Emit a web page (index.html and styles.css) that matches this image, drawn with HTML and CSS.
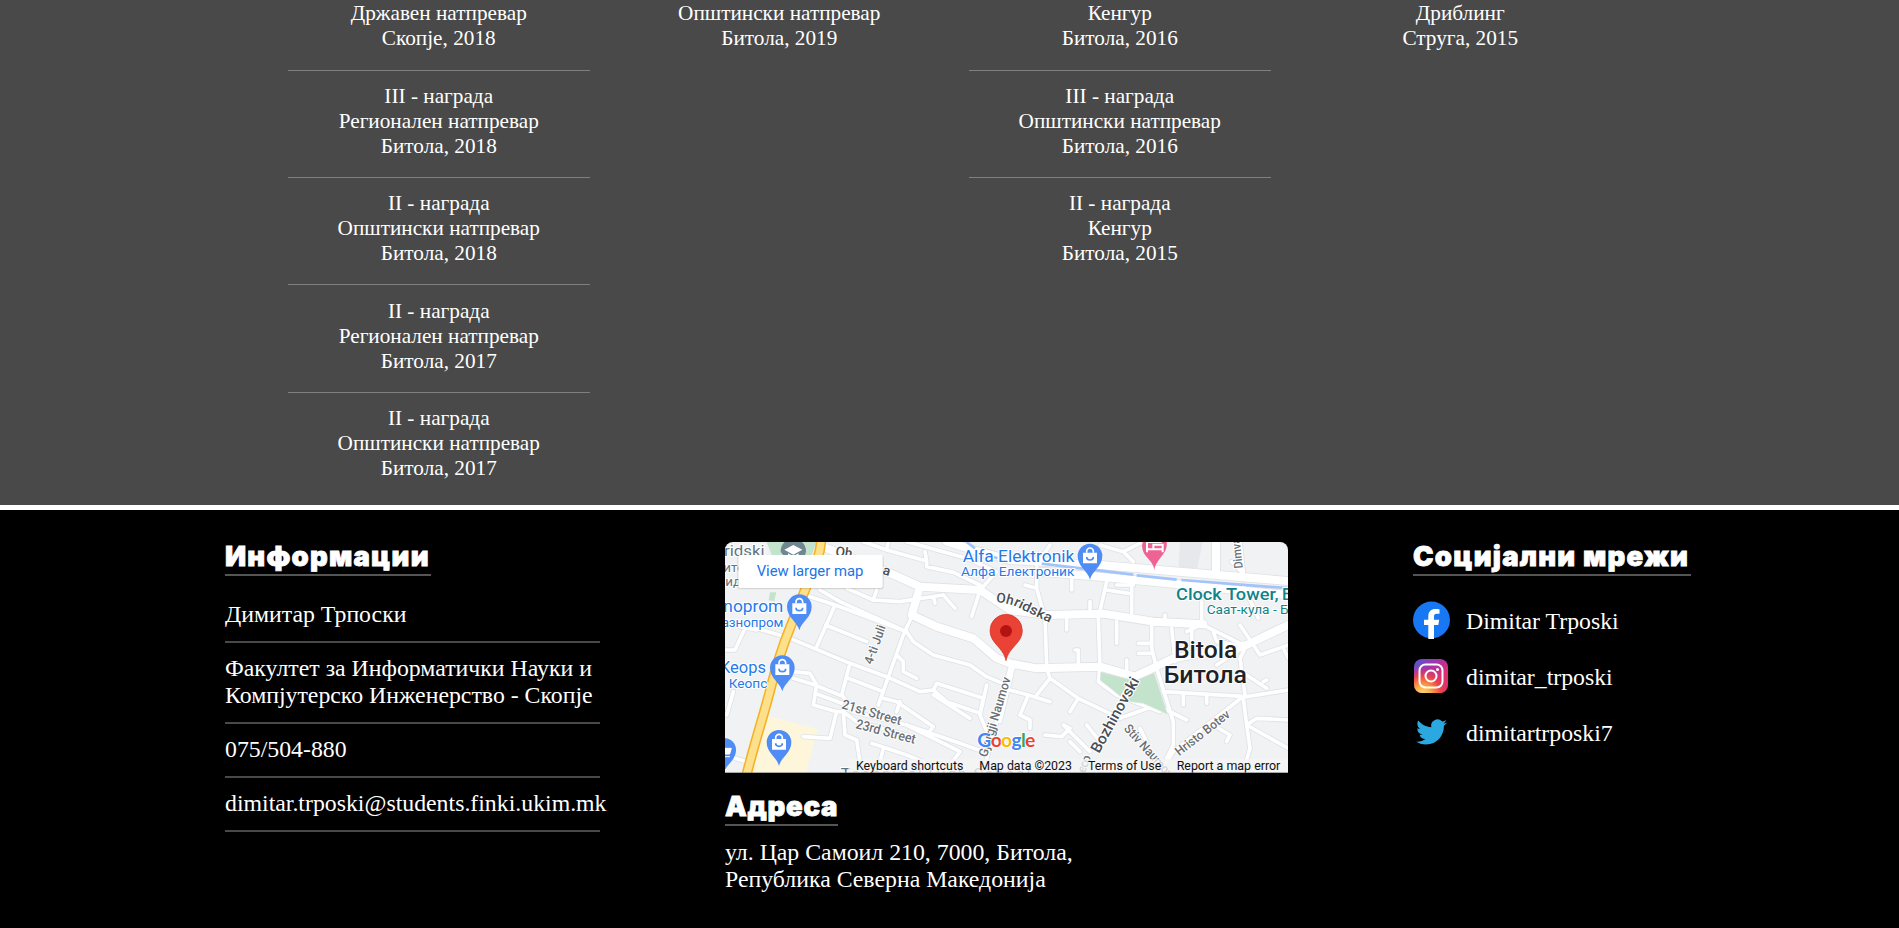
FILE: index.html
```html
<!DOCTYPE html>
<html lang="mk">
<head>
<meta charset="utf-8">
<title>Димитар Трпоски</title>
<link rel="stylesheet" href="styles.css">
</head>
<body>
<section class="awards">
  <div class="column">
    <p class="award">Државен натпревар<br>Скопје, 2018</p>
    <p class="award">III - награда<br>Регионален натпревар<br>Битола, 2018</p>
    <p class="award">II - награда<br>Општински натпревар<br>Битола, 2018</p>
    <p class="award">II - награда<br>Регионален натпревар<br>Битола, 2017</p>
    <p class="award">II - награда<br>Општински натпревар<br>Битола, 2017</p>
  </div>
  <div class="column">
    <p class="award">Општински натпревар<br>Битола, 2019</p>
  </div>
  <div class="column">
    <p class="award">Кенгур<br>Битола, 2016</p>
    <p class="award">III - награда<br>Општински натпревар<br>Битола, 2016</p>
    <p class="award">II - награда<br>Кенгур<br>Битола, 2015</p>
  </div>
  <div class="column">
    <p class="award">Дриблинг<br>Струга, 2015</p>
  </div>
</section>
<footer class="footer">
  <div class="info">
    <h2 class="title title-info">Информации</h2>
    <p class="row">Димитар Трпоски</p>
    <p class="row">Факултет за Информатички Науки и<br>Компјутерско Инженерство - Скопје</p>
    <p class="row">075/504-880</p>
    <p class="row">dimitar.trposki@students.finki.ukim.mk</p>
  </div>
  <div class="address">
    <svg class="map" viewBox="15 21 1689 693" preserveAspectRatio="none">
      <defs>
        <g id="small">
          <path d="M505 20L500 45L620 78L620 95L700 112L780 150M615 50L620 78M500 45L430 20M560 20L740 70L830 110L780 165L755 245M380 160L460 195L540 200L670 180M460 195L470 165M640 185L645 205M670 180L705 220M300 165L360 200L560 290M255 180L345 210L560 290M345 210L290 335M317 270L440 320M210 310L390 385L500 425L600 470L640 465L650 445L790 490M110 280L210 310M60 275L110 285M75 280L45 345L15 345M575 245L550 300L475 510M560 290L580 320L640 360L750 390L800 425L860 450M535 365L550 380L550 410L590 430M390 385L365 480M385 430L490 470M220 430L285 450L370 485L400 530L560 570L720 650M220 410L270 415L290 450L280 510L350 530L370 530L410 560L560 600M350 530L330 610L250 605M285 475L365 505M370 530L375 600L410 615L420 680M490 490L530 500L640 575L620 600M540 500L530 530M640 465L680 500L780 535L790 490M640 480L750 550M800 450L780 540L800 590M870 400L840 520L790 710M560 570L720 625L790 650M455 625L560 660L680 710M490 640L480 680M720 650L690 690M15 660L80 680M40 470L20 540"/>
          <g transform="translate(840)">
            <path d="M150 30L110 90L110 160L135 250L140 392M215 130L215 165M75 150L110 160M320 140L295 250L300 398M395 140L395 235M320 165L385 175M350 150L400 150M270 200L270 240M200 250L200 285M350 260L350 325M415 325L455 325M415 355L455 355M455 270L455 340L470 400L520 560L520 630L500 670M515 280L525 380M575 280L575 330M495 240L495 265M605 200L605 268L740 335M605 268L560 290M730 150L775 250M720 270L780 360L865 330M850 340L865 370M640 290L650 320L710 330M650 390L740 330L720 370L735 480M235 345L235 395M380 375L380 415M225 345L235 345M40 395L0 560M140 400L150 430L235 490L360 550L470 510L560 555M150 430L110 480M235 490L210 530M10 460L85 480L150 500M85 480L60 540L90 555L90 580M300 400L295 440L350 480L480 530M490 470L740 485L865 465M740 420L800 460M550 480L550 510M620 480L620 505M735 480L520 650L480 710M730 490L740 570L865 640M740 570L770 550L865 555M640 570L690 600L680 620M740 570L750 640L735 690M135 600L185 605L210 580L190 570L270 650M210 620L240 650M260 570L300 620M420 580L440 620M455 20L460 45M370 50L400 80M300 30L370 50L430 20M695 80L730 115L720 20M790 440L800 435"/>
          </g>
        </g>
        <g id="large">
          <path d="M320 40L500 110L600 155L780 165L870 225L980 240L1150 236L1300 260L1450 268M600 155L575 240L650 275L760 310L830 370L870 385L950 400L1140 395L1245 425L1360 370L1580 330L1704 270M680 20L760 45L870 75L1140 90L1704 138M960 110L1140 125L1400 150L1704 180M1488 20L1488 120"/>
        </g>
        <g id="bag">
          <path d="M0 69C-6 43-37 30-37 -2A37 37 0 1 1 37 -2C37 30 6 43 0 69Z" fill="#4f8df5"/>
          <path d="M-21 -12H21V20H-21Z" fill="#fff"/>
          <path d="M-10 -12V-16A10 10 0 0 1 10 -16V-12" fill="none" stroke="#fff" stroke-width="5"/>
          <path d="M-10 1A10 9 0 0 0 10 1" fill="none" stroke="#4f8df5" stroke-width="5"/>
        </g>
      </defs>
      <rect x="15" y="21" width="1689" height="693" fill="#f0f2f4"/>
      <path d="M1380 21H1448L1430 110L1375 105Z" fill="#e6e8ec"/>
      <path d="M140 21H290L275 60H155ZM150 172L169 172L163 198L146 196Z" fill="#c4e3cc"/>
      <path d="M145 543L293 582L258 714H95Z" fill="#fef6da"/>
      <g class="road casing"><use href="#small" stroke-width="16"/><use href="#large" stroke-width="29"/></g>
      <g class="road"><use href="#small" stroke-width="11"/><use href="#large" stroke-width="24"/></g>
      <path d="M1142 412L1245 438L1302 414L1342 537L1270 505L1218 498L1142 435Z" fill="#c4e3cc" stroke="#d9e3dc" stroke-width="2"/>
      <path d="M1190 525L1245 430" stroke="#fff" stroke-width="22"/>
      <path d="M740 21L765 40M822 66L832 70M965 86L1240 119M1250 121L1370 134M1384 135L1640 155L1704 159" fill="none" stroke="#a3c4fa" stroke-width="8"/>
      <path d="M303 16C302 75 265 130 240 205C205 290 180 350 157 440C135 530 110 600 80 718" class="highway-edge"/>
      <path d="M303 16C302 75 265 130 240 205C205 290 180 350 157 440C135 530 110 600 80 718" class="highway"/>
      <g class="halo">
        <g class="grey" font-size="43">
          <text x="12" y="63" textLength="122" lengthAdjust="spacingAndGlyphs" fill="#5f7480">ridski</text>
          <text x="10" y="110" font-size="40" fill="#5f7480">ите</text>
          <text x="16" y="154" font-size="40" fill="#5f7480">ид</text>
        </g>
        <g class="road-name" font-size="41">
          <text transform="translate(345 62) rotate(8)">Oh</text>
          <text transform="translate(486 117) rotate(16)">a</text>
          <text transform="translate(828 202) rotate(5)">O</text>
          <text transform="translate(856 205) rotate(15)">h</text>
          <text transform="translate(879 210) rotate(26)" textLength="122" lengthAdjust="spacingAndGlyphs">ridska</text>
          <text transform="translate(456 390) rotate(-70)" class="grey" textLength="122" lengthAdjust="spacingAndGlyphs" font-size="38">4-ti Juli</text>
          <text transform="translate(363 520) rotate(16)" class="grey" textLength="184" lengthAdjust="spacingAndGlyphs" font-size="40">21st Street</text>
          <text transform="translate(405 579) rotate(15)" class="grey" textLength="184" lengthAdjust="spacingAndGlyphs" font-size="40">23rd Street</text>
          <text transform="translate(800 668) rotate(-73)" class="grey" textLength="248" lengthAdjust="spacingAndGlyphs" font-size="38">Gjorgji Naumov</text>
          <text transform="translate(1137 657) rotate(-61)" textLength="252" lengthAdjust="spacingAndGlyphs" font-size="45">Bozhinovski</text>
          <text transform="translate(1094 716) rotate(-68)" class="grey" textLength="54" font-size="38">eco</text>
          <text transform="translate(1210 582) rotate(48)" class="grey" textLength="200" lengthAdjust="spacingAndGlyphs" font-size="38">Stiv Naumov</text>
          <text transform="translate(1378 664) rotate(-38)" class="grey" textLength="196" lengthAdjust="spacingAndGlyphs" font-size="38">Hristo Botev</text>
          <text transform="translate(1568 99) rotate(-96)" class="grey" textLength="92" lengthAdjust="spacingAndGlyphs" font-size="36">Dimva</text>
        </g>
        <g class="place">
          <text x="10" y="231" font-size="50" textLength="180" lengthAdjust="spacingAndGlyphs">noprom</text>
          <text x="5" y="275" font-size="39" textLength="185" lengthAdjust="spacingAndGlyphs">азнопром</text>
          <text x="0" y="415" font-size="50" textLength="138" lengthAdjust="spacingAndGlyphs">Keops</text>
          <text x="26" y="459" font-size="40" textLength="116" lengthAdjust="spacingAndGlyphs">Кеопс</text>
          <text x="728" y="80" font-size="50" textLength="335" lengthAdjust="spacingAndGlyphs">Alfa Elektronik</text>
          <text x="723" y="123" font-size="39" textLength="340" lengthAdjust="spacingAndGlyphs">Алфа Електроник</text>
        </g>
        <g fill="#128289">
          <text x="1368" y="195" font-size="50" font-weight="500" textLength="308" lengthAdjust="spacingAndGlyphs">Clock Tower,</text>
          <text x="1686" y="195" font-size="50" font-weight="500">B</text>
          <text x="1460" y="237" font-size="39" textLength="246" lengthAdjust="spacingAndGlyphs">Саат-кула - Б</text>
        </g>
        <g fill="#1f2124" font-weight="500">
          <text x="1362" y="369" font-size="73" textLength="190" lengthAdjust="spacingAndGlyphs">Bitola</text>
          <text x="1331" y="443" font-size="73" textLength="250" lengthAdjust="spacingAndGlyphs">Битола</text>
        </g>
        <text x="362" y="736" font-size="50" fill="#5f7480" textLength="570">Technical High School</text>
      </g>
      <use href="#bag" x="238" y="217"/><use href="#bag" x="187" y="400"/><use href="#bag" x="177" y="624"/><use href="#bag" x="1110" y="65"/>
      <path d="M17 702C20 690 48 674 48 645A36 36 0 0 0 15 609V702Z" fill="#4f8df5"/>
      <path d="M15 640H34L29 657H15M15 665H30" fill="#fff" stroke="#fff" stroke-width="3"/>
      <path d="M182 50A38 38 0 0 1 194 21H246A38 38 0 0 1 258 50C255 75 225 80 220 100Z" fill="#708792"/>
      <path d="M220 30L247 44L220 59L193 44ZM204 55L220 64L236 55V65L220 73L204 65Z" fill="#fff"/>
      <path d="M1266 33L1268 21H1340C1345 55 1310 70 1303 104C1298 72 1267 67 1266 33Z" fill="#ef6296"/>
      <path d="M1281 21V52M1281 43H1328M1328 52V29H1300V42M1281 21H1325" fill="none" stroke="#fff" stroke-width="6"/>
      <path d="M858 377C851 337 810 325 810 287A48.500 49 0 0 1 907 287C907 325 865 337 858 377Z" fill="#ea4335" stroke="#cf3428" stroke-width="2"/>
      <circle cx="858" cy="288" r="18" fill="#b31412"/>
      <rect x="385" y="672" width="1319" height="42" fill="#f5f5f5" fill-opacity=".76"/>
      <g class="legal" font-size="37">
        <text x="408" y="705" textLength="322" lengthAdjust="spacingAndGlyphs">Keyboard shortcuts</text>
        <text x="778" y="705" textLength="278" lengthAdjust="spacingAndGlyphs">Map data ©2023</text>
        <text x="1104" y="705" textLength="220" lengthAdjust="spacingAndGlyphs">Terms of Use</text>
        <text x="1370" y="705" textLength="311" lengthAdjust="spacingAndGlyphs">Report a map error</text>
      </g>
      <text x="772" y="637" class="logo" textLength="174"><tspan fill="#4285f4">G</tspan><tspan fill="#ea4335">o</tspan><tspan fill="#fbbc04">o</tspan><tspan fill="#4285f4">g</tspan><tspan fill="#34a853">l</tspan><tspan fill="#ea4335">e</tspan></text>
      <rect x="52" y="62" width="439" height="101" rx="7" fill="#000" fill-opacity=".12"/>
      <rect x="55" y="60" width="433" height="99" rx="5" fill="#fff"/>
      <text x="110" y="122" font-size="44" fill="#1a73e8" textLength="320" lengthAdjust="spacingAndGlyphs">View larger map</text>
      <rect x="15" y="711" width="1689" height="3" fill="#777" fill-opacity=".6"/>
    </svg>
    <h2 class="title title-address">Адреса</h2>
    <p class="text">ул. Цар Самоил 210, 7000, Битола,<br>Република Северна Македонија</p>
  </div>
  <div class="social">
    <h2 class="title title-social">Социјални мрежи</h2>
    <a class="link">
      <svg class="icon" viewBox="0 0 38 38"><circle cx="18.500" cy="19" r="18.500" fill="#1877f2"/><path d="M15.300 38V24H11V18.700H15.300V15.500C15.300 10.500 17.900 8 22.600 8C24.500 8 26.500 8.300 26.500 8.300V12.700H24C21.500 12.700 21 14 21 15.700V18.700H26.200L25.300 24H21V38Z" fill="#fff"/></svg>
      <span>Dimitar Trposki</span>
    </a>
    <a class="link">
      <svg class="icon" viewBox="0 0 38 38">
        <defs>
          <linearGradient id="ig" x1="0" y1="0" x2="1" y2="1"><stop offset="0" stop-color="#4b5ed0"/><stop offset=".35" stop-color="#a233b0"/><stop offset=".7" stop-color="#e1306c"/><stop offset="1" stop-color="#d82b75"/></linearGradient>
          <radialGradient id="glow" cx=".25" cy="1.050" r=".85"><stop offset="0" stop-color="#ffdf80"/><stop offset=".3" stop-color="#fbad42"/><stop offset=".65" stop-color="#ef4843" stop-opacity=".9"/><stop offset="1" stop-color="#d62e7c" stop-opacity="0"/></radialGradient>
        </defs>
        <rect x="1" y="2" width="34" height="34" rx="8" fill="url(#ig)"/><rect x="1" y="2" width="34" height="34" rx="8" fill="url(#glow)"/>
        <g fill="none" stroke="#fff" stroke-width="2"><rect x="6.500" y="7.500" width="23" height="23" rx="6"/><circle cx="18" cy="19" r="5.500"/></g><circle cx="24.500" cy="12.600" r="1.500" fill="#fff"/>
      </svg>
      <span>dimitar_trposki</span>
    </a>
    <a class="link">
      <svg class="icon" viewBox="0 0 38 38"><path transform="translate(3.100 3.500) scale(1.290)" fill="#2ca8e0" d="M23.954 4.569a10 10 0 0 1-2.825.775 4.958 4.958 0 0 0 2.163-2.723c-.951.555-2.005.959-3.127 1.184a4.920 4.920 0 0 0-8.384 4.482C7.691 8.094 4.066 6.130 1.640 3.161a4.822 4.822 0 0 0-.666 2.475c0 1.710.870 3.213 2.188 4.096a4.904 4.904 0 0 1-2.228-.616v.061a4.923 4.923 0 0 0 3.946 4.827 4.996 4.996 0 0 1-2.212.085 4.937 4.937 0 0 0 4.604 3.417 9.868 9.868 0 0 1-6.102 2.105c-.39 0-.779-.023-1.170-.067a13.995 13.995 0 0 0 7.557 2.209c9.054 0 13.999-7.496 13.999-13.986 0-.209 0-.42-.015-.63a9.936 9.936 0 0 0 2.460-2.548z"/></svg>
      <span>dimitartrposki7</span>
    </a>
  </div>
</footer>
</body>
</html>
```

FILE: styles.css
```css
* { box-sizing: border-box; }

body {
  margin: 0;
  height: 928px;
  overflow: hidden;
  background: #000;
  color: #fff;
  font-family: "Liberation Serif", serif;
}

p, h2 { margin: 0; }

.awards {
  display: grid;
  grid-template-columns: repeat(4, 302.5px);
  gap: 38px;
  justify-content: center;
  align-items: start;
  height: 510px;
  padding-top: 1px;
  border-bottom: 5px solid #fff;
  background: #494949;
  font-size: 21.25px;
  line-height: 25px;
  text-align: center;
}

.award:first-child { padding-bottom: 1px; }

.award + .award {
  margin-top: 18px;
  padding-top: 13.2px;
  border-top: 1px solid #808080;
}

.footer {
  display: grid;
  grid-template-columns: 375px 563px 278px;
  column-gap: 125px;
  align-items: start;
  padding: 32px 0 0 225px;
  font-size: 23.8px;
  line-height: 27px;
}

.title {
  height: 34px;
  border-bottom: 2px solid #555;
  font-family: "Arial Black", Inter, sans-serif;
  font-size: 27.5px;
  font-weight: 900;
  line-height: 28px;
  letter-spacing: 1.2px;
  white-space: nowrap;
  -webkit-text-stroke: .8px #fff;
}

.title-info { width: 206px; }
.title-address { width: 113px; margin-top: 19px; letter-spacing: .7px; }
.title-social { width: 278px; }

.row {
  padding: 12px 0 13px;
  border-bottom: 2px solid #494949;
  white-space: nowrap;
}

.title + .row { padding-top: 25px; }

.map {
  display: block;
  width: 563px;
  height: 231px;
  border-radius: 8px 8px 0 0;
  font-family: Roboto, sans-serif;
}

.road { fill: none; stroke: #fff; stroke-linecap: round; stroke-linejoin: round; }
.casing { stroke: #dfe2e6; }
.highway-edge { fill: none; stroke: #f7b021; stroke-width: 31px; }
.highway { fill: none; stroke: #fde08c; stroke-width: 22px; }
.halo { stroke: #fff; stroke-width: 6px; stroke-linejoin: round; paint-order: stroke; }
.road-name { fill: #4a4e52; font-weight: 500; }
.grey { fill: #6b7075; }
.place { fill: #2679e8; }
.legal { fill: #111; }

.logo {
  font-family: Lato, sans-serif;
  font-size: 58px;
  font-weight: 700;
  stroke: #fff;
  stroke-width: 5px;
  paint-order: stroke;
}

.text { padding-top: 13px; }

.link {
  display: flex;
  align-items: center;
  gap: 15px;
  height: 56px;
}

.link span { padding-top: 2px; }

.title + .link { margin-top: 16px; }

.icon { width: 38px; height: 38px; flex: none; }
```
